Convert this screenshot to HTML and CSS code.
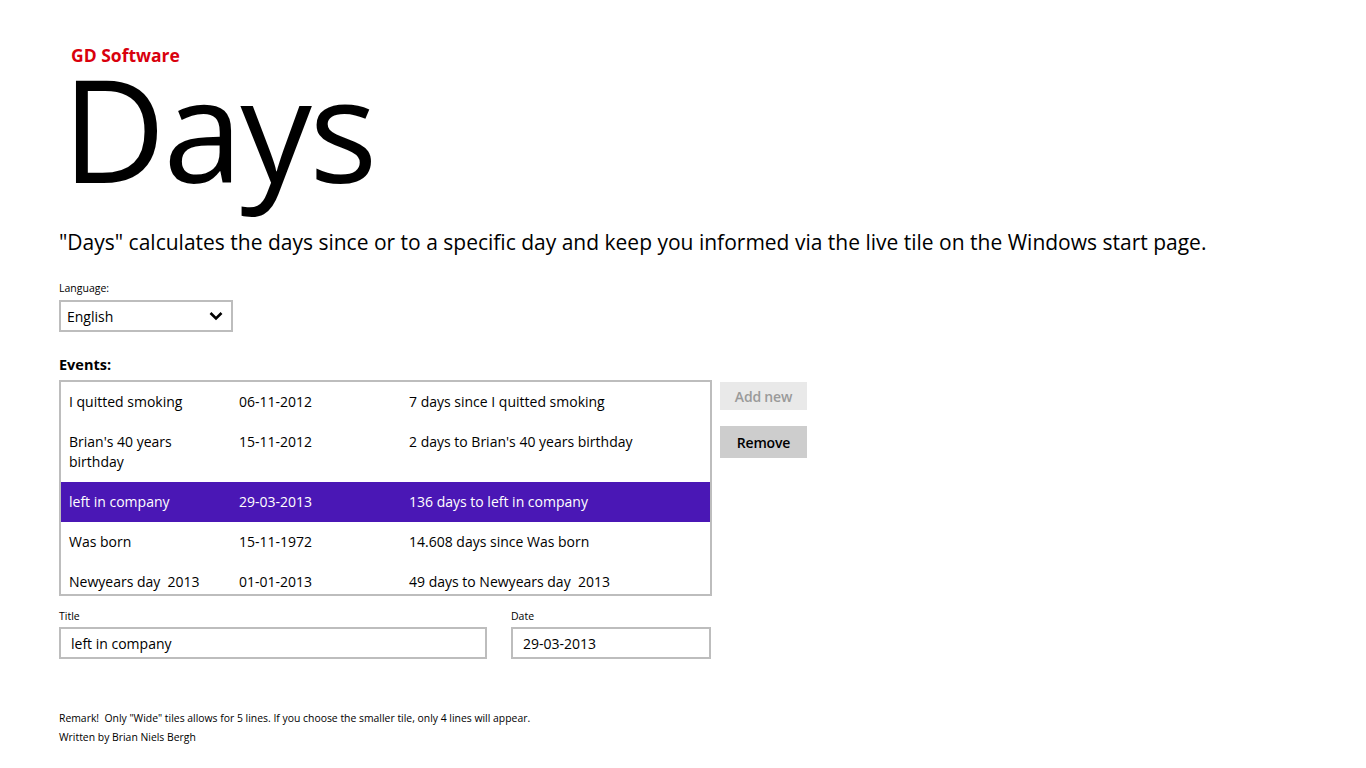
FILE: index.html
```html
<!DOCTYPE html>
<html>
<head>
<meta charset="utf-8">
<link rel="stylesheet" href="styles.css">
</head>
<body>
<div class="page">
  <header class="header">
    <div class="brand">GD Software</div>
    <h1 class="title">Days</h1>
  </header>
  <p class="intro">"Days" calculates the days since or to a specific day and keep you informed via the live tile on the Windows start page.</p>

  <div class="field-label lang-label">Language:</div>
  <div class="select">
    <span>English</span>
    <svg class="chev" width="14" height="10" viewBox="0 0 14 10"><path d="M1.5 2 L7 7.5 L12.5 2" fill="none" stroke="#000" stroke-width="2.6"/></svg>
  </div>

  <div class="events-label">Events:</div>
  <div class="events">
    <div class="list">
      <div class="row"><span>I quitted smoking</span><span>06-11-2012</span><span>7 days since I quitted smoking</span></div>
      <div class="row"><span>Brian's 40 years birthday</span><span>15-11-2012</span><span>2 days to Brian's 40 years birthday</span></div>
      <div class="row selected"><span>left in company</span><span>29-03-2013</span><span>136 days to left in company</span></div>
      <div class="row"><span>Was born</span><span>15-11-1972</span><span>14.608 days since Was born</span></div>
      <div class="row"><span>Newyears day&nbsp; 2013</span><span>01-01-2013</span><span>49 days to Newyears day&nbsp; 2013</span></div>
    </div>
    <div class="buttons">
      <button class="btn disabled">Add new</button>
      <button class="btn">Remove</button>
    </div>
  </div>

  <div class="edit">
    <div class="edit-field title-field">
      <div class="field-label">Title</div>
      <div class="input">left in company</div>
    </div>
    <div class="edit-field date-field">
      <div class="field-label">Date</div>
      <div class="input">29-03-2013</div>
    </div>
  </div>

  <footer class="footer">
    <div>Remark!&nbsp; Only "Wide" tiles allows for 5 lines. If you choose the smaller tile, only 4 lines will appear.</div>
    <div>Written by Brian Niels Bergh</div>
  </footer>
</div>
</body>
</html>
```

FILE: styles.css
```css
html, body {
  margin: 0;
  padding: 0;
  background: #fff;
}
body {
  font-family: "Open Sans", "Noto Sans", sans-serif;
  color: #000;
  width: 1366px;
  height: 768px;
  overflow: hidden;
}
.page {
  padding: 43px 0 0 59px;
}
.header {
  padding-left: 12px;
}
.brand {
  color: #d9000d;
  font-weight: 700;
  font-size: 17.5px;
  line-height: 24px;
}
.title {
  margin: 0 0 0 -9px;
  font-weight: 400;
  font-size: 143px;
  line-height: 121px;
  letter-spacing: -2.5px;
}
.intro {
  margin: 40px 0 0 0;
  font-size: 21px;
  line-height: 28px;
}
.field-label {
  font-size: 10.5px;
  line-height: 14px;
  color: #000;
}
.lang-label {
  margin-top: 25px;
}
.select {
  margin-top: 5px;
  width: 174px;
  height: 32px;
  box-sizing: border-box;
  border: 2px solid #bdbdbd;
  display: flex;
  align-items: center;
  justify-content: space-between;
  padding: 0 8px 0 6px;
  font-size: 14px;
}
.chev {
  display: block;
}
.events-label {
  margin-top: 23px;
  font-weight: 700;
  font-size: 14.5px;
  line-height: 20px;
}
.events {
  margin-top: 5px;
  display: flex;
  gap: 8px;
  align-items: flex-start;
}
.list {
  width: 653px;
  height: 216px;
  box-sizing: border-box;
  border: 2px solid #bdbdbd;
  overflow: hidden;
}
.row {
  display: grid;
  grid-template-columns: 170px 170px 1fr;
  padding: 10px 0 10px 8px;
  font-size: 14px;
  line-height: 20px;
}
.row:last-child {
  padding-bottom: 0;
}
.row span:first-child {
  padding-right: 28px;
}
.row.selected {
  background: #4a17b5;
  color: #fff;
}
.buttons {
  display: flex;
  flex-direction: column;
  gap: 16px;
  padding-top: 2px;
}
.btn {
  width: 87px;
  height: 32px;
  border: none;
  background: #cdcdcd;
  font-family: inherit;
  font-size: 14px;
  font-weight: 600;
  letter-spacing: -0.2px;
  color: #000;
  padding: 0;
}
.btn.disabled {
  background: #e9e9e9;
  color: #9a9a9a;
  height: 28px;
}
.edit {
  margin-top: 13px;
  display: flex;
  gap: 24px;
}
.edit .input {
  margin-top: 4px;
  height: 32px;
  box-sizing: border-box;
  border: 2px solid #bdbdbd;
  display: flex;
  align-items: center;
  padding-left: 10px;
  font-size: 14px;
}
.title-field { width: 428px; }
.date-field { width: 200px; }
.footer {
  margin-top: 50px;
  font-size: 10.4px;
  line-height: 19px;
}
```
